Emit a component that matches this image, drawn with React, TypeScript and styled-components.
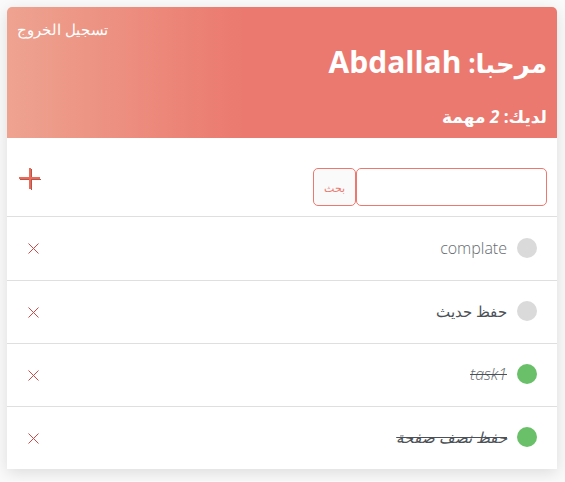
import React, { useState } from "react";
import styled, { createGlobalStyle } from "styled-components";

const GlobalStyle = createGlobalStyle`
  * { box-sizing: border-box; }
  body {
    margin: 0;
    padding: 7px 8px 12px 7px;
    background: #fafafa;
    color: #4b5156;
    font-family: "Open Sans", "DejaVu Sans", sans-serif;
    font-weight: 300;
  }
  svg { display: block; }
`;

const Card = styled.main`
  max-width: 550px;
  margin: 0 auto;
  background: #fff;
  border-radius: 5px 5px 0 0;
  box-shadow: 0 4px 16px rgba(0, 0, 0, 0.12);
`;

const Header = styled.header`
  display: flex;
  justify-content: space-between;
  align-items: flex-start;
  padding: 10px 10px 8px;
  border-radius: 5px 5px 0 0;
  color: #fff;
  background: linear-gradient(90deg, #eea390 0%, #eb796f 43%, #eb796f 100%);
`;

const Greeting = styled.div`
  font-weight: 700;
`;

const Title = styled.h1`
  margin: 24px 0 0;
  font-size: 26px;
  line-height: 42px;
`;

const UserName = styled.bdi`
  font-size: 30px;
`;

const Count = styled.h3`
  margin: 20px 0 0;
  font-size: 17px;
  line-height: 26px;
`;

const Logout = styled.a`
  color: #fff;
  font-size: 15px;
  line-height: 24px;
  text-decoration: none;
`;

const Toolbar = styled.div`
  display: flex;
  justify-content: space-between;
  align-items: flex-start;
  padding: 30px 10px 10px;
  border-bottom: 1px solid #dfdfdf;
`;

const SearchForm = styled.form`
  display: flex;
`;

const SearchInput = styled.input`
  width: 191px;
  height: 38px;
  padding: 10px;
  border: 1px solid #eb796f;
  border-radius: 5px;
  background: #fff;
  font: inherit;
  outline: none;
`;

const SearchButton = styled.button`
  width: 43px;
  height: 38px;
  padding: 0;
  border: 1px solid #eb796f;
  border-radius: 5px;
  background: #fafafa;
  color: #eb796f;
  font: inherit;
  font-size: 11px;
`;

const AddLink = styled.a`
  display: block;
`;

const List = styled.ul`
  margin: 0;
  padding: 0;
  list-style: none;
`;

const Row = styled.li`
  display: flex;
  align-items: center;
  gap: 10px;
  min-height: 63px;
  padding: 0 20px 2px;
  & + & { border-top: 1px solid #dfdfdf; }
`;

const Status = styled.span<{ $done: boolean }>`
  flex: none;
  width: 20px;
  height: 20px;
  border-radius: 50%;
  background: ${(p) => (p.$done ? "#69c069" : "#dadada")};
`;

const TaskLink = styled.a<{ $done: boolean }>`
  color: #4b5156;
  font-size: 16px;
  line-height: 24px;
  font-style: ${(p) => (p.$done ? "italic" : "normal")};
  text-decoration: ${(p) => (p.$done ? "line-through" : "none")};
  text-decoration-color: #4b5156;

  &:lang(en) { color: #666b70; }
  &:lang(ar) { font-size: 15px; }
`;

const DeleteLink = styled.a`
  display: block;
  margin-right: auto;
`;

const tasks = [
  { title: "complate", lang: "en", done: false },
  { title: "حفظ حديث", lang: "ar", done: false },
  { title: "task1", lang: "en", done: true },
  { title: "حفظ نصف صفحة", lang: "ar", done: true },
];

export default function App() {
  const [query, setQuery] = useState("");
  return (
    <>
      <GlobalStyle />
      <Card dir="rtl" lang="ar">
        <Header>
          <Greeting>
            <Title>مرحبا: <UserName>Abdallah</UserName></Title>
            <Count>لديك: <i>2</i> مهمة</Count>
          </Greeting>
          <Logout href="#logout">تسجيل الخروج</Logout>
        </Header>
        <Toolbar>
          <SearchForm onSubmit={(e) => e.preventDefault()}>
            <SearchInput
              type="text"
              aria-label="بحث"
              value={query}
              onChange={(e) => setQuery(e.target.value)}
            />
            <SearchButton type="submit">بحث</SearchButton>
          </SearchForm>
          <AddLink href="#add" aria-label="إضافة">
            <svg width="26" height="24" viewBox="0 0 26 24">
              <path d="M3 11.5H24M14.5 1V22" stroke="#b0564c" strokeWidth="1" />
              <path d="M2 10H23M13 0V21" stroke="#ee6a58" strokeWidth="2" />
            </svg>
          </AddLink>
        </Toolbar>
        <List>
          {tasks.map((task) => (
            <Row key={task.title}>
              <Status $done={task.done} />
              <TaskLink href="#task" lang={task.lang} $done={task.done}>{task.title}</TaskLink>
              <DeleteLink href="#delete" aria-label="حذف">
                <svg width="13" height="13" viewBox="0 0 13 13">
                  <path d="M1.5 2.5L11.5 12.5M11.5 2.5L1.5 12.5" stroke="#cf4949" strokeWidth="1" />
                </svg>
              </DeleteLink>
            </Row>
          ))}
        </List>
      </Card>
    </>
  );
}
